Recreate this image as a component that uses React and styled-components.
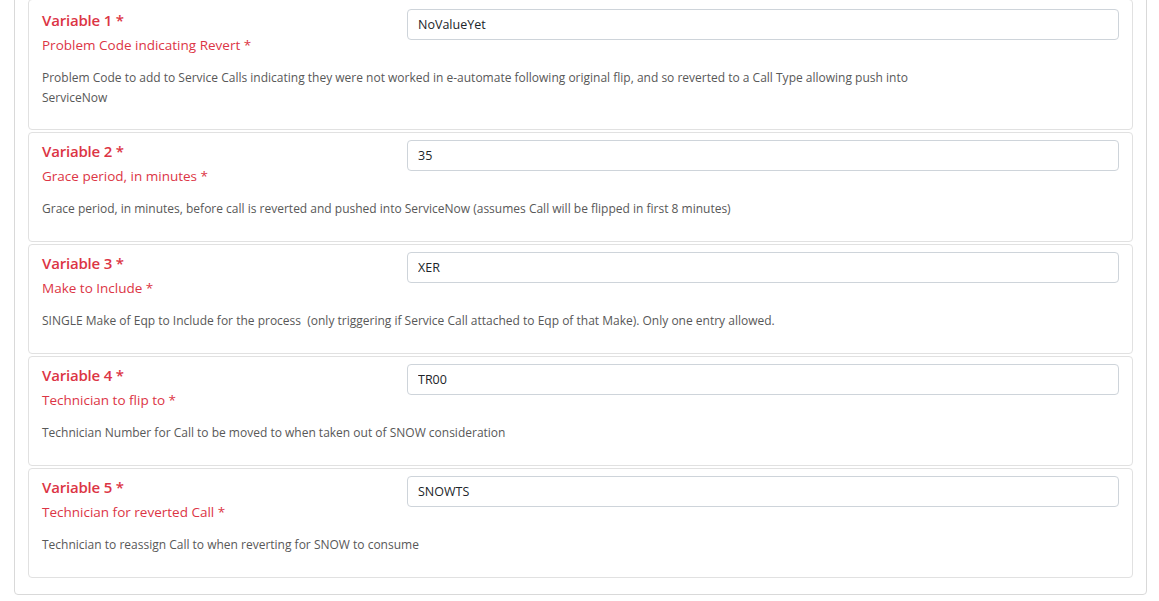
import React from 'react';
import styled, { createGlobalStyle } from 'styled-components';

const GlobalStyle = createGlobalStyle`
  html, body {
    margin: 0;
    padding: 0;
    background: #ffffff;
  }
  body {
    font-family: "Open Sans", "Noto Sans", "Liberation Sans", sans-serif;
    color: #212529;
    overflow: hidden;
  }
`;

// the page is scrolled a little: the top of the panel sits above the window
const Page = styled.div`
  margin-top: -15px;
  padding: 0 12px 0 14px;
`;

const Panel = styled.div`
  border: 1px solid #d9d9d9;
  border-radius: 4px;
  padding: 13px 13px 14px;
`;

const VariableCard = styled.div`
  border: 1px solid #e1e1e1;
  border-radius: 4px;
  padding: 6px 13px 22px;
  margin-bottom: 2px;

  &:first-child {
    padding-top: 8px;
    padding-bottom: 21px;
  }
`;

const Head = styled.div`
  display: grid;
  grid-template-columns: 351px 1fr;
  column-gap: 14px;
  align-items: start;
`;

const Labels = styled.div`
  display: flex;
  flex-direction: column;
`;

const Title = styled.div`
  font-size: 15px;
  font-weight: 600;
  line-height: 24px;
  letter-spacing: -0.2px;
  color: #dc3545;
`;

const Label = styled.div`
  margin-top: 3px;
  font-size: 13.5px;
  line-height: 21px;
  color: #dc3545;
`;

const Input = styled.input`
  margin-top: 1px;
  box-sizing: border-box;
  width: 100%;
  height: 31px;
  padding: 0 10px;
  border: 1px solid #ced4da;
  border-radius: 4px;
  font-family: inherit;
  font-size: 12.5px;
  color: #212529;
  background: #fff;
  outline: none;
`;

const Description = styled.p`
  margin: 12px 0 0;
  max-width: 900px;
  font-size: 12px;
  line-height: 20px;
  color: #585858;
`;

const variables = [
  {
    id: 1,
    label: 'Problem Code indicating Revert',
    value: 'NoValueYet',
    desc: 'Problem Code to add to Service Calls indicating they were not worked in e-automate following original flip, and so reverted to a Call Type allowing push into ServiceNow',
  },
  {
    id: 2,
    label: 'Grace period, in minutes',
    value: '35',
    desc: 'Grace period, in minutes, before call is reverted and pushed into ServiceNow (assumes Call will be flipped in first 8 minutes)',
  },
  {
    id: 3,
    label: 'Make to Include',
    value: 'XER',
    desc: 'SINGLE Make of Eqp to Include for the process\u00a0 (only triggering if Service Call attached to Eqp of that Make). Only one entry allowed.',
  },
  {
    id: 4,
    label: 'Technician to flip to',
    value: 'TR00',
    desc: 'Technician Number for Call to be moved to when taken out of SNOW consideration',
  },
  {
    id: 5,
    label: 'Technician for reverted Call',
    value: 'SNOWTS',
    desc: 'Technician to reassign Call to when reverting for SNOW to consume',
  },
];

export default function App() {
  return (
    <>
      <GlobalStyle />
      <Page>
        <Panel>
          {variables.map((v) => (
            <VariableCard key={`_var-${v.id}`}>
              <Head>
                <Labels>
                  <Title>{`Variable ${v.id} *`}</Title>
                  <Label>{`${v.label} *`}</Label>
                </Labels>
                <Input defaultValue={v.value} />
              </Head>
              <Description>{v.desc}</Description>
            </VariableCard>
          ))}
        </Panel>
      </Page>
    </>
  );
}
